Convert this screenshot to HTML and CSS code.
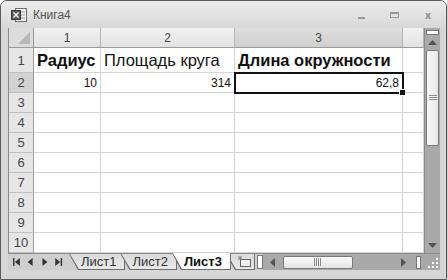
FILE: index.html
```html
<!DOCTYPE html>
<html lang="ru">
<head>
    <meta charset="UTF-8" />
    <title>Книга4</title>
    <link rel="stylesheet" href="styles.css">
</head>
<body>
    <div class="window">
        <div class="titlebar">
            <svg class="app-icon" width="17" height="16" viewBox="0 0 17 16">
                <rect x="4.5" y="1.5" width="11" height="13" fill="#f4f4f4" stroke="#6a6a6a"/>
                <line x1="7" y1="5" x2="14" y2="5" stroke="#9a9a9a"/>
                <line x1="7" y1="8" x2="14" y2="8" stroke="#9a9a9a"/>
                <line x1="7" y1="11" x2="14" y2="11" stroke="#9a9a9a"/>
                <rect x="0.5" y="3.5" width="9" height="9" fill="#5c5c5c" stroke="#3a3a3a"/>
                <path d="M2.5 5.5 L7.5 10.5 M7.5 5.5 L2.5 10.5" stroke="#fff" stroke-width="1.4"/>
            </svg>
            <span class="title">Книга4</span>
            <div class="controls">
                <span class="ctl min"></span>
                <span class="ctl max"></span>
                <span class="ctl close">x</span>
            </div>
        </div>

        <div class="workarea">
            <div class="sheet">
                <div class="corner"></div>
                <div class="colhead">1</div>
                <div class="colhead">2</div>
                <div class="colhead sel">3</div>
                <div class="colhead"></div>

                <div class="rowhead">1</div>
                <div class="cell big bold">Радиус</div>
                <div class="cell big">Площадь круга</div>
                <div class="cell big bold">Длина окружности</div>
                <div class="cell"></div>

                <div class="rowhead sel">2</div>
                <div class="cell num">10</div>
                <div class="cell num">314</div>
                <div class="cell num active">62,8</div>
                <div class="cell"></div>

                <div class="rowhead">3</div><div class="cell"></div><div class="cell"></div><div class="cell"></div><div class="cell"></div>
                <div class="rowhead">4</div><div class="cell"></div><div class="cell"></div><div class="cell"></div><div class="cell"></div>
                <div class="rowhead">5</div><div class="cell"></div><div class="cell"></div><div class="cell"></div><div class="cell"></div>
                <div class="rowhead">6</div><div class="cell"></div><div class="cell"></div><div class="cell"></div><div class="cell"></div>
                <div class="rowhead">7</div><div class="cell"></div><div class="cell"></div><div class="cell"></div><div class="cell"></div>
                <div class="rowhead">8</div><div class="cell"></div><div class="cell"></div><div class="cell"></div><div class="cell"></div>
                <div class="rowhead">9</div><div class="cell"></div><div class="cell"></div><div class="cell"></div><div class="cell"></div>
                <div class="rowhead">10</div><div class="cell"></div><div class="cell"></div><div class="cell"></div><div class="cell"></div>
            </div>

            <div class="vscroll">
                <div class="splitbox"></div>
                <div class="arrow-btn">
                    <svg width="9" height="5" viewBox="0 0 9 5"><path d="M0 5 L4.5 0 L9 5 Z" fill="#555"/></svg>
                </div>
                <div class="vthumb">
                    <svg width="8" height="6" viewBox="0 0 8 6"><path d="M0 0.5 H8 M0 2.5 H8 M0 4.5 H8" stroke="#8a8a8a"/></svg>
                </div>
                <div class="vtrack"></div>
                <div class="arrow-btn">
                    <svg width="9" height="5" viewBox="0 0 9 5"><path d="M0 0 L4.5 5 L9 0 Z" fill="#555"/></svg>
                </div>
            </div>
        </div>

        <div class="tabbar">
            <div class="tabnav">
                <svg width="56" height="10" viewBox="0 0 56 10">
                    <rect x="0" y="1" width="1.5" height="8" fill="#333"/>
                    <path d="M7 1 L2 5 L7 9 Z" fill="#333"/>
                    <path d="M20 1 L15 5 L20 9 Z" fill="#333"/>
                    <path d="M30 1 L35 5 L30 9 Z" fill="#333"/>
                    <path d="M43 1 L48 5 L43 9 Z" fill="#333"/>
                    <rect x="48.5" y="1" width="1.5" height="8" fill="#333"/>
                </svg>
            </div>
            <div class="tabs">
                <div class="tab"><span>Лист1</span></div>
                <div class="tab"><span>Лист2</span></div>
                <div class="tab current"><span>Лист3</span></div>
                <div class="tab newtab"><span>
                    <svg width="16" height="12" viewBox="0 0 16 12">
                        <rect x="4.5" y="3.5" width="10" height="7" fill="#eee" stroke="#666"/>
                        <path d="M4 0 V4 M2 2 H6 M2.5 0.5 L5.5 3.5 M5.5 0.5 L2.5 3.5" stroke="#888"/>
                    </svg>
                </span></div>
            </div>
            <div class="tabsplit"></div>
            <div class="hscroll">
                <svg class="harrow" width="5" height="9" viewBox="0 0 5 9"><path d="M5 0 L0 4.5 L5 9 Z" fill="#555"/></svg>
                <div class="hthumb">
                    <svg width="7" height="8" viewBox="0 0 7 8"><path d="M0.5 0 V8 M2.5 0 V8 M4.5 0 V8 M6.5 0 V8" stroke="#8a8a8a"/></svg>
                </div>
                <svg class="harrow right" width="5" height="9" viewBox="0 0 5 9"><path d="M0 0 L5 4.5 L0 9 Z" fill="#555"/></svg>
                <div class="hsplit"></div>
            </div>
            <div class="grip">
                <svg width="10" height="10" viewBox="0 0 10 10">
                    <rect x="8" y="0" width="2" height="2" fill="#fff"/>
                    <rect x="4" y="4" width="2" height="2" fill="#fff"/>
                    <rect x="8" y="4" width="2" height="2" fill="#fff"/>
                    <rect x="0" y="8" width="2" height="2" fill="#fff"/>
                    <rect x="4" y="8" width="2" height="2" fill="#fff"/>
                    <rect x="8" y="8" width="2" height="2" fill="#fff"/>
                </svg>
            </div>
        </div>
    </div>
</body>
</html>
```

FILE: styles.css
```css
* {
    box-sizing: border-box;
}

body {
    margin: 0;
    background: #fff;
    font-family: 'Liberation Sans', Arial, sans-serif;
    color: #222;
}

.window {
    width: 447px;
    height: 280px;
    border: 1px solid #5a5a5a;
    border-radius: 7px 7px 0 0;
    background: #d6d6d6;
    padding: 0 6px 9px 7px;
    display: flex;
    flex-direction: column;
    overflow: hidden;
}

.titlebar {
    height: 27px;
    display: flex;
    align-items: center;
    background: linear-gradient(#ececec, #d8d8d8);
    margin: 0 -6px 0 -7px;
    padding: 0 10px 0 10px;
}

.app-icon {
    margin-top: 1px;
}

.title {
    font-size: 12px;
    color: #555;
    margin-left: 5px;
    margin-top: 1px;
}

.controls {
    margin-left: auto;
    display: flex;
    align-items: center;
    gap: 25px;
    padding-right: 4px;
}

.ctl {
    width: 8px;
    height: 8px;
    display: flex;
    align-items: center;
    justify-content: center;
    color: #888;
    font-size: 11px;
    font-weight: bold;
}

.ctl.min::after {
    content: "";
    width: 7px;
    height: 2px;
    background: #999;
    margin-top: 6px;
}

.ctl.max {
    border: 1px solid #999;
    border-top-width: 2px;
    height: 6px;
    width: 9px;
}

.workarea {
    display: flex;
    height: 225px;
}

.sheet {
    width: 416px;
    display: grid;
    grid-template-columns: 25px 67px 134px 168px 1fr;
    grid-template-rows: 20px 25px repeat(9, 20px);
    background: #fff;
    border-left: 1px solid #8a8a8a;
}

.corner {
    background: #dcdcdc;
    border-right: 1px solid #9a9a9a;
    border-bottom: 1px solid #9a9a9a;
    position: relative;
}

.corner::after {
    content: "";
    position: absolute;
    right: 3px;
    bottom: 3px;
    border-left: 12px solid transparent;
    border-bottom: 12px solid #b8b8b8;
}

.colhead {
    background: linear-gradient(#f2f2f2, #e2e2e2);
    border-right: 1px solid #b4b4b4;
    border-bottom: 1px solid #9a9a9a;
    font-size: 12px;
    color: #444;
    display: flex;
    align-items: center;
    justify-content: center;
}

.colhead.sel {
    background: linear-gradient(#dedede, #cfcfcf);
}

.rowhead {
    background: #e6e6e6;
    border-right: 1px solid #9a9a9a;
    border-bottom: 1px solid #c0c0c0;
    font-size: 13px;
    color: #444;
    display: flex;
    align-items: center;
    justify-content: center;
}

.rowhead.sel {
    background: #d2d2d2;
}

.cell {
    border-right: 1px solid #d4d4d4;
    border-bottom: 1px solid #d4d4d4;
    font-size: 12px;
    color: #111;
    display: flex;
    align-items: center;
    padding: 0 3px;
    white-space: nowrap;
}

.cell.big {
    font-size: 16.5px;
    align-items: flex-end;
    padding-bottom: 2px;
}

.cell.bold {
    font-weight: bold;
}

.cell.num {
    justify-content: flex-end;
    padding-top: 1px;
}

.cell.active {
    outline: 2px solid #111;
    outline-offset: -1px;
    position: relative;
    z-index: 1;
}

.cell.active::after {
    content: "";
    position: absolute;
    right: -4px;
    bottom: -4px;
    width: 5px;
    height: 5px;
    background: #111;
    border: 1px solid #fff;
}

.vscroll {
    width: 16px;
    background: #a9a9a9;
    border-left: 1px solid #8c8c8c;
    display: flex;
    flex-direction: column;
    align-items: center;
}

.splitbox {
    width: 13px;
    height: 5px;
    margin-top: 2px;
    background: #fff;
    border: 1px solid #777;
}

.arrow-btn {
    height: 15px;
    width: 100%;
    display: flex;
    align-items: center;
    justify-content: center;
}

.vthumb {
    width: 13px;
    height: 96px;
    background: linear-gradient(to right, #fafafa, #e6e6e6);
    border: 1px solid #7a7a7a;
    border-radius: 2px;
    display: flex;
    align-items: center;
    justify-content: center;
}

.vtrack {
    flex: 1;
}

.tabbar {
    height: 17px;
    display: flex;
    align-items: flex-start;
    background: #cfcfcf;
    border-top: 1px solid #8a8a8a;
}

.tabnav {
    width: 60px;
    height: 16px;
    display: flex;
    align-items: center;
    padding-left: 5px;
}

.tabs {
    display: flex;
    margin-left: 1px;
}

.tab {
    height: 16px;
    background: #6e6e6e;
    clip-path: polygon(0 0, 100% 0, 100% 100%, 9px 100%);
    padding: 0 1px 1px 0;
    margin-left: -5px;
}

.tab:first-child {
    margin-left: 0;
}

.tab span {
    display: flex;
    align-items: center;
    height: 15px;
    padding: 0 8px 0 12px;
    font-size: 13px;
    color: #333;
    background: linear-gradient(#dadada, #e8e8e8);
    clip-path: polygon(1px 0, 100% 0, 100% 100%, 10px 100%);
}

.tab.current {
    z-index: 2;
    margin-top: -1px;
    height: 17px;
}

.tab.current span {
    height: 16px;
    background: #fff;
    font-weight: bold;
    color: #111;
}

.tab.newtab span {
    padding: 0 2px 0 10px;
}

.tabsplit {
    width: 6px;
    height: 14px;
    margin: 1px 0 0 2px;
    background: #fff;
    border: 1px solid #777;
}

.hscroll {
    flex: 1;
    height: 16px;
    background: #a9a9a9;
    display: flex;
    align-items: center;
    padding: 0 3px 0 7px;
}

.hthumb {
    width: 70px;
    height: 13px;
    margin-left: 8px;
    background: linear-gradient(#fafafa, #e4e4e4);
    border: 1px solid #7a7a7a;
    border-radius: 2px;
    display: flex;
    align-items: center;
    justify-content: center;
}

.harrow.right {
    margin-left: auto;
}

.hsplit {
    width: 5px;
    height: 13px;
    margin-left: 10px;
    background: #fff;
    border: 1px solid #777;
}

.grip {
    width: 16px;
    height: 16px;
    background: #a9a9a9;
    display: flex;
    align-items: flex-end;
    justify-content: flex-end;
    padding: 0 2px 2px 0;
}
```
